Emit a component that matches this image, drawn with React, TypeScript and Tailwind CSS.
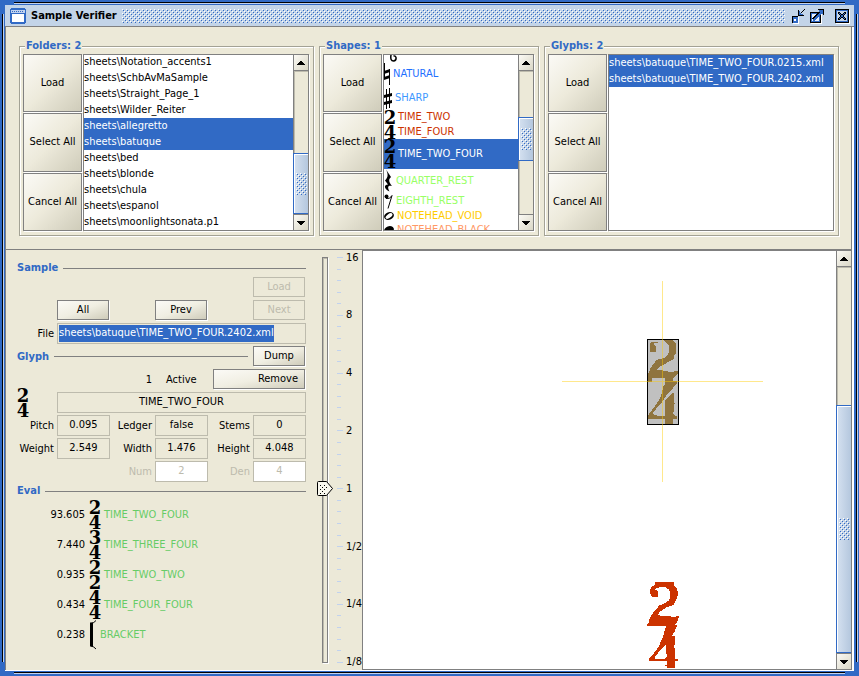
import { useEffect, useRef, useState } from 'react';
import type { ReactNode } from 'react';

/* Small dotted texture used by the title bar and the scroll thumbs. */
function Bumps({ id, className }: { id: string; className: string }) {
  return (
    <svg className={className} shapeRendering="crispEdges" aria-hidden="true">
      <defs>
        <pattern id={id} width="4" height="4" patternUnits="userSpaceOnUse">
          <rect x="0" y="0" width="1" height="1" fill="#ffffff" />
          <rect x="2" y="2" width="1" height="1" fill="#ffffff" />
          <rect x="1" y="1" width="1" height="1" fill="#316ac5" />
          <rect x="3" y="3" width="1" height="1" fill="#316ac5" />
        </pattern>
      </defs>
      <rect width="100%" height="100%" fill={`url(#${id})`} />
    </svg>
  );
}

function WindowIcon() {
  return (
    <svg width="16" height="16" viewBox="0 0 16 16" shapeRendering="crispEdges" aria-hidden="true">
      <rect x="0" y="1" width="16" height="14" fill="#316ac5" />
      <rect x="1" y="0" width="14" height="16" fill="#316ac5" />
      <rect x="1" y="2" width="14" height="3" fill="#c1d2ee" />
      <rect x="2" y="6" width="12" height="8" fill="#ffffff" />
      <path d="M2 3h1v1h-1zM4 3h1v1h-1zM6 3h1v1h-1zM8 3h1v1h-1zM10 3h1v1h-1zM12 3h1v1h-1z" fill="#316ac5" />
    </svg>
  );
}

function TitleButton({ label, children }: { label: string; children: ReactNode }) {
  return (
    <button type="button" aria-label={label} className="h-4 w-4">
      <svg width="16" height="16" viewBox="0 0 16 16" shapeRendering="crispEdges" aria-hidden="true">
        {children}
      </svg>
    </button>
  );
}

function TitleBar() {
  return (
    <header className="flex h-[22px] shrink-0 items-center border-b border-[#808080] bg-[#c3d4e8] pr-1 pl-[5px]">
      <WindowIcon />
      <h1 className="ml-[5px] text-[11px] leading-4 font-bold">Sample Verifier</h1>
      <Bumps id="title-bumps" className="ml-[5px] h-[14px] min-w-0 flex-1" />
      <div className="ml-[6px] flex items-center gap-0.5">
        <TitleButton label="Iconify">
          <rect x="2" y="9" width="6" height="7" fill="#fff" />
          <rect x="1" y="8" width="6" height="7" fill="#000" />
          <rect x="2" y="9" width="5" height="6" fill="#316ac5" />
          <rect x="3" y="11" width="2" height="2" fill="#fff" />
          <path d="M7 2h1v5h5v1h-6z" fill="#000" />
          <path d="M8 3h1v2h1v-1h1v-1h1v-1h1v1h-1v1h-1v1h-1v1h2v1h-4z" fill="#316ac5" />
          <path d="M10 4h1v-1h1v-1h1v-1h1v1h-1v1h-1v1h-1v1h-1z" fill="#000" />
        </TitleButton>
        <TitleButton label="Maximize">
          <rect x="2" y="5" width="11" height="11" fill="#fff" />
          <rect x="1" y="4" width="11" height="11" fill="#000" />
          <rect x="2" y="5" width="9" height="9" fill="#316ac5" />
          <rect x="3" y="6" width="7" height="7" fill="#e8f0fa" />
          <path d="M4 12L13 3" stroke="#000" strokeWidth="3" />
          <path d="M4 13L14 3" stroke="#316ac5" strokeWidth="2" />
          <path d="M9 1h6v6h-1v-4h-1v-1h-4z" fill="#000" />
          <path d="M10 2h4v4h-1v-2h-3z" fill="#316ac5" />
        </TitleButton>
      </div>
      <div className="ml-[9px] flex">
        <TitleButton label="Close">
          <rect x="2" y="2" width="14" height="14" fill="#fff" />
          <rect x="1" y="1" width="14" height="14" fill="#000" />
          <rect x="2" y="2" width="12" height="12" fill="#316ac5" />
          <rect x="3" y="3" width="10" height="10" fill="#c3d4e8" />
          <path d="M4 4h2v1h1v1h2v-1h1v-1h2v2h-1v1h-1v2h1v1h1v2h-2v-1h-1v-1h-2v1h-1v1h-2v-2h1v-1h1v-2h-1v-1h-1z" fill="#000" />
          <path d="M5 5h1v1h1v1h2v-1h1v-1h1v1h-1v1h-1v2h1v1h1v1h-1v-1h-1v-1h-2v1h-1v1h-1v-1h1v-1h1v-2h-1v-1h-1z" fill="#316ac5" />
        </TitleButton>
      </div>
    </header>
  );
}

function ArrowButton({ up }: { up?: boolean }) {
  return (
    <button
      type="button"
      aria-label={up ? 'Scroll up' : 'Scroll down'}
      className={
        'flex h-4 shrink-0 items-center justify-center bg-linear-to-br from-[#fbfaf5] to-[#dad7c6] ' +
        (up ? 'border-b border-[#808080]' : 'border-t border-[#808080]')
      }
    >
      <svg width="8" height="4" viewBox="0 0 8 4" shapeRendering="crispEdges" aria-hidden="true">
        <path d={up ? 'M3 0h2v1h1v1h1v1h1v1h-8v-1h1v-1h1v-1h1z' : 'M0 0h8v1h-1v1h-1v1h-1v1h-2v-1h-1v-1h-1v-1h-1z'} />
      </svg>
    </button>
  );
}

/* The three classes give the share of the track above, inside and below the thumb. */
function ScrollBar({ id, above, thumb, below }: { id: string; above: string; thumb: string; below: string }) {
  return (
    <div className="flex w-[15px] shrink-0 flex-col border-l border-[#808080] bg-[#ece9d8]">
      <ArrowButton up />
      <div className="flex min-h-0 flex-1 flex-col shadow-[inset_1px_1px_0_#bdbbad]">
        <div className={`basis-0 ${above}`} />
        <div
          className={`-ml-px flex basis-0 items-center justify-center border-y border-l border-[#316ac5] bg-linear-to-r from-[#d5e1f0] to-[#b4c7de] shadow-[inset_1px_1px_0_#fff] ${thumb}`}
        >
          <Bumps id={id} className="h-[22px] w-[11px]" />
        </div>
        <div className={`basis-0 ${below}`} />
      </div>
      <ArrowButton />
    </div>
  );
}

function SelectorPanel({ title, children }: { title: string; children: ReactNode }) {
  return (
    <fieldset className="min-w-0 border border-[#a3a295] pr-1 pb-1 pl-[3px] shadow-[1px_1px_0_#fff,inset_1px_1px_0_#fff]">
      <legend className="ml-0.5 bg-[#ece9d8] px-px text-[11px] leading-[14px] font-bold text-[#316ac5]">{title}</legend>
      <div className="mt-px flex h-[177px] gap-px">
        <div className="flex w-[59px] shrink-0 flex-col gap-px">
          {['Load', 'Select All', 'Cancel All'].map((label) => (
            <button
              key={label}
              type="button"
              className="min-h-0 flex-1 border border-[#808080] bg-linear-to-br from-[#fbfaf6] via-[#edeadb] to-[#cfccba] text-[11px] whitespace-nowrap shadow-[1px_1px_0_#fff]"
            >
              {label}
            </button>
          ))}
        </div>
        <div className="flex min-w-0 flex-1 border border-[#808080] bg-white shadow-[1px_1px_0_#fff]">{children}</div>
      </div>
    </fieldset>
  );
}

const folders = [
  'Notation_accents1',
  'SchbAvMaSample',
  'Straight_Page_1',
  'Wilder_Reiter',
  'allegretto',
  'batuque',
  'bed',
  'blonde',
  'chula',
  'espanol',
  'moonlightsonata.p1',
];
const pickedFolders = ['allegretto', 'batuque'];

function TimeDigits({ digits }: { digits: string[] }) {
  return (
    <span className="flex w-3 shrink-0 flex-col items-center font-['DejaVu_Serif',serif] text-[18px] leading-[15px] font-bold text-black">
      {digits.map((d, i) => (
        <span key={i} className="h-[15px]">
          {d}
        </span>
      ))}
    </span>
  );
}

function NaturalIcon() {
  return (
    <svg width="7" height="24" viewBox="0 0 7 24" className="shrink-0" aria-hidden="true">
      <path d="M0.5 1v16M5.5 7v16" stroke="#000" strokeWidth="1" fill="none" />
      <path d="M0 9l6-2v3l-6 2zM0 15l6-2v3l-6 2z" />
    </svg>
  );
}

function SharpIcon() {
  return (
    <svg width="9" height="22" viewBox="0 0 9 22" className="shrink-0" aria-hidden="true">
      <path d="M2.5 1v20M5.5 0v20" stroke="#000" strokeWidth="1" fill="none" />
      <path d="M0 7l8-2v3l-8 2zM0 14l8-2v3l-8 2z" />
    </svg>
  );
}

function QuarterRestIcon() {
  return (
    <svg width="9" height="24" viewBox="0 0 9 24" className="shrink-0" aria-hidden="true">
      <path d="M2 0.500l5 7.500c-3 3-2 5 1 9-4-1-5 1-2.500 5.500-5-2.500-6.500-6.500-1.500-7l-3-4c3-3 3.500-6 1-11z" />
    </svg>
  );
}

function EighthRestIcon() {
  return (
    <svg width="9" height="16" viewBox="0 0 9 16" className="shrink-0" aria-hidden="true">
      <circle cx="2.5" cy="3.5" r="2" />
      <path d="M2 5.5q4 1 6-3l-4 13" stroke="#000" strokeWidth="1" fill="none" />
    </svg>
  );
}

function NoteheadIcon({ filled }: { filled?: boolean }) {
  return (
    <svg width="10" height="10" viewBox="0 0 10 10" className="shrink-0" aria-hidden="true">
      <ellipse cx="5" cy="5" rx="5" ry="3.8" transform="rotate(-20 5 5)" />
      {!filled && <ellipse cx="5" cy="5" rx="4" ry="2" transform="rotate(-36 5 5)" fill="#fff" />}
    </svg>
  );
}

const shapes: { name: string; row: string; icon: ReactNode; picked?: boolean }[] = [
  { name: 'NATURAL', row: 'h-[26px] gap-0.5 text-[#1f70ff]', icon: <NaturalIcon /> },
  { name: 'SHARP', row: 'h-[23px] gap-0.5 text-[#3d98ff]', icon: <SharpIcon /> },
  { name: 'TIME_TWO', row: 'h-[15px] gap-0.5 text-[#cc3300]', icon: <TimeDigits digits={['2']} /> },
  { name: 'TIME_FOUR', row: 'h-[14px] gap-0.5 text-[#cc3300]', icon: <TimeDigits digits={['4']} /> },
  { name: 'TIME_TWO_FOUR', row: 'h-[30px] gap-0.5 bg-[#316ac5] text-white', icon: <TimeDigits digits={['2', '4']} />, picked: true },
  { name: 'QUARTER_REST', row: 'h-6 gap-[3px] text-[#99ff66]', icon: <QuarterRestIcon /> },
  { name: 'EIGHTH_REST', row: 'h-4 gap-[3px] text-[#99ff66]', icon: <EighthRestIcon /> },
  { name: 'NOTEHEAD_VOID', row: 'h-[14px] gap-[3px] text-[#ffcc00]', icon: <NoteheadIcon /> },
  { name: 'NOTEHEAD_BLACK', row: 'h-[14px] gap-[3px] text-[#ff9966]', icon: <NoteheadIcon filled /> },
];

function Selectors() {
  return (
    <section className="grid shrink-0 grid-cols-[1fr_220px_1fr] gap-[5px] border-b border-[#808080] pt-3 pr-3 pb-[13px] pl-[13px]">
      <SelectorPanel title="Folders: 2">
        <ul role="listbox" aria-label="Folders" className="flex min-w-0 flex-1 flex-col justify-end overflow-hidden">
          {folders.map((f) => (
            <li
              key={f}
              role="option"
              aria-selected={pickedFolders.includes(f)}
              className={
                'h-4 shrink-0 text-[11px] leading-4 whitespace-nowrap ' + (pickedFolders.includes(f) ? 'bg-[#316ac5] text-white' : '')
              }
            >
              {`sheets\\${f}`}
            </li>
          ))}
        </ul>
        <ScrollBar id="folder-bumps" above="grow-[84]" thumb="grow-[60]" below="grow-0" />
      </SelectorPanel>
      <SelectorPanel title="Shapes: 1">
        <ul role="listbox" aria-label="Shapes" className="min-w-0 flex-1 overflow-hidden">
          <li role="option" aria-selected={false} aria-label="Previous shape" className="h-1.5 pl-1.5">
            <svg width="7" height="7" viewBox="0 0 7 7" aria-hidden="true">
              <path d="M1 0q-1 6 2.500 6q3-.5 2.500-3.500q-.5-2-2.500-1.500" fill="none" stroke="#000" strokeWidth="1.500" />
            </svg>
          </li>
          {shapes.map((s) => (
            <li key={s.name} role="option" aria-selected={!!s.picked} className={`flex items-center text-[11px] ${s.row}`}>
              {s.icon}
              {s.name}
            </li>
          ))}
        </ul>
        <ScrollBar id="shape-bumps" above="grow-[47]" thumb="grow-[43]" below="grow-[54]" />
      </SelectorPanel>
      <SelectorPanel title="Glyphs: 2">
        <ul role="listbox" aria-label="Glyphs" className="min-w-0 flex-1 overflow-hidden">
          {['0215', '2402'].map((n) => (
            <li key={n} role="option" aria-selected className="h-4 bg-[#316ac5] text-[11px] leading-4 whitespace-nowrap text-white">
              {`sheets\\batuque\\TIME_TWO_FOUR.${n}.xml`}
            </li>
          ))}
        </ul>
      </SelectorPanel>
    </section>
  );
}

function Heading({ title, className }: { title: string; className: string }) {
  return (
    <div className={`flex items-center gap-[5px] ${className}`}>
      <h2 className="text-[11px] leading-[14px] font-bold text-[#316ac5]">{title}</h2>
      <span className="h-px flex-1 bg-[#808080]" />
    </div>
  );
}

function PushButton({ label, className = '', disabled }: { label: string; className?: string; disabled?: boolean }) {
  return (
    <button
      type="button"
      disabled={disabled}
      className={
        'mr-px mb-px border text-[11px] leading-4 ' +
        (disabled
          ? 'border-[#bdbbad] text-[#bdbbad] '
          : 'border-[#808080] bg-linear-to-br from-[#fbfaf6] via-[#f0eee2] to-[#cfccba] shadow-[1px_1px_0_#fff] ') +
        className
      }
    >
      {label}
    </button>
  );
}

function Field({ id, label, value, disabled }: { id: string; label: string; value: string; disabled?: boolean }) {
  return (
    <>
      <label htmlFor={id} className={'text-right leading-[21px] ' + (disabled ? 'text-[#bdbbad]' : '')}>
        {label}
      </label>
      <input
        id={id}
        readOnly
        disabled={disabled}
        value={value}
        className={'min-w-0 border border-[#bdbbad] text-center text-[11px] ' + (disabled ? 'bg-white text-[#bdbbad]' : '')}
      />
    </>
  );
}

const evaluations = [
  { grade: '93.605', name: 'TIME_TWO_FOUR', digits: ['2', '4'] },
  { grade: '7.440', name: 'TIME_THREE_FOUR', digits: ['3', '4'] },
  { grade: '0.935', name: 'TIME_TWO_TWO', digits: ['2', '2'] },
  { grade: '0.434', name: 'TIME_FOUR_FOUR', digits: ['4', '4'] },
];

function GlyphBoard() {
  const file = useRef<HTMLInputElement>(null);
  useEffect(() => {
    file.current?.focus();
    file.current?.select();
  }, []);
  return (
    <section className="shrink-0 pt-[11px] pl-[11px] text-[11px]">
      <div className="grid grid-cols-[37px_53px_39px_53px_39px_53px] grid-rows-[14px] gap-x-[3px] gap-y-0.5 auto-rows-[21px]">
        <Heading title="Sample" className="col-span-6" />
        <PushButton label="Load" disabled className="col-start-6" />
        <PushButton label="All" className="col-start-2" />
        <PushButton label="Prev" className="col-start-4" />
        <PushButton label="Next" disabled className="col-start-6" />
        <label htmlFor="file" className="text-right leading-[21px]">
          File
        </label>
        <input
          id="file"
          ref={file}
          readOnly
          defaultValue={'sheets\\batuque\\TIME_TWO_FOUR.2402.xml'}
          className="col-span-5 min-w-0 border border-[#bdbbad] px-px text-[11px] outline-none selection:bg-[#316ac5] selection:text-white"
        />
        <Heading title="Glyph" className="col-span-5 mr-0.5" />
        <PushButton label="Dump" />
        <span className="col-start-3 text-right leading-[21px]">1</span>
        <span className="pl-[11px] leading-[21px]">Active</span>
        <PushButton label="Remove" className="col-span-2 ml-0.5 pr-1.5 text-right" />
        <div className="flex items-center">
          <TimeDigits digits={['2', '4']} />
        </div>
        <input
          aria-label="Shape"
          readOnly
          value="TIME_TWO_FOUR"
          className="col-span-5 min-w-0 border border-[#bdbbad] text-center text-[11px]"
        />
        <Field id="pitch" label="Pitch" value="0.095" />
        <Field id="ledger" label="Ledger" value="false" />
        <Field id="stems" label="Stems" value="0" />
        <Field id="weight" label="Weight" value="2.549" />
        <Field id="width" label="Width" value="1.476" />
        <Field id="height" label="Height" value="4.048" />
        <span className="col-span-2" />
        <Field id="num" label="Num" value="2" disabled />
        <Field id="den" label="Den" value="4" disabled />
      </div>
      <Heading title="Eval" className="mt-0.5" />
      <ul className="mt-0.5">
        {evaluations.map((e) => (
          <li key={e.name} className="flex h-[30px] items-center">
            <span className="w-[68px] text-right">{e.grade}</span>
            <span className="mx-[3px] ml-1 flex">
              <TimeDigits digits={e.digits} />
            </span>
            <span className="text-[#66cc66]">{e.name}</span>
          </li>
        ))}
        <li className="flex h-[30px] items-center">
          <span className="w-[68px] text-right">0.238</span>
          <svg width="8" height="30" viewBox="0 0 8 30" className="mr-[3px] ml-1" aria-hidden="true">
            <path d="M1 2.500h3v24h-3z" />
            <path d="M2 3.500q3-.5 5-3M2 26q3 .5 5 3" fill="none" stroke="#000" strokeWidth="1" />
          </svg>
          <span className="text-[#66cc66]">BRACKET</span>
        </li>
      </ul>
    </section>
  );
}

const zoomLabels = ['16', '8', '4', '2', '1', '1/2', '1/4', '1/8'];

function ZoomSlider() {
  const [zoom, setZoom] = useState(15);
  return (
    <section className="relative flex w-14 shrink-0 pt-[7px] pb-[7px] pl-4">
      <div className="relative w-1.5 border border-[#808080] shadow-[1px_1px_0_#fff,inset_1px_1px_0_#bdbbad]">
        <svg
          width="16"
          height="16"
          viewBox="0 0 16 16"
          className="absolute -left-1.5 -mt-2"
          style={{ top: `${((35 - zoom) / 35) * 100}%` }}
          aria-hidden="true"
        >
          <path d="M1.500 0.500h8l6 7-6 7h-8q-1-0-1-1v-12q0-1 1-1z" fill="#f8f7ee" stroke="#000" />
          <path
            d="M3 4h1v1h-1zM7 4h1v1h-1zM5 6h1v1h-1zM3 8h1v1h-1zM7 8h1v1h-1zM5 10h1v1h-1zM3 12h1v1h-1zM7 12h1v1h-1zM9 6h1v1h-1z"
            shapeRendering="crispEdges"
          />
        </svg>
      </div>
      <div className="ml-[9px] flex flex-col justify-between text-[11px]">
        {Array.from({ length: 36 }, (_, i) => (
          <div key={i} className="flex h-px items-center gap-[3px]">
            <span className={'h-px bg-[#c1d2ee] ' + (i % 5 === 0 ? 'w-1.5' : 'w-1')} />
            {i % 5 === 0 && <span className="leading-4">{zoomLabels[i / 5]}</span>}
          </div>
        ))}
      </div>
      <input
        type="range"
        aria-label="Zoom"
        min={0}
        max={35}
        value={zoom}
        onChange={(e) => setZoom(Number(e.target.value))}
        className="absolute inset-y-0 left-3 w-4 opacity-0 [direction:rtl] [writing-mode:vertical-lr]"
      />
    </section>
  );
}

/* Scanned glyph bitmaps laid on the free drawing area. */
function SheetView() {
  return (
    <section className="flex min-w-0 flex-1 border-t border-b border-l border-[#808080] bg-white">
      <div className="relative min-w-0 flex-1 overflow-hidden">
        <svg className="absolute inset-0 h-full w-full" shapeRendering="crispEdges" role="img" aria-label="Sheet glyphs">
          <g transform="translate(-363 -251)">
            <rect x="647.500" y="339.500" width="31" height="85" fill="#c0c0c0" stroke="#000" />
            <g transform="translate(550 270) scale(0.3333)">
              <path
                fill="#8f743f"
                d="M342 210H369L372 216 378 222V252L372 258V266L345 282 330 290 318 300H336L339 303 370 306 375 303H384V312L378 318 369 324V333H381V340L372 350 360 366 348 378 333 400 318 417 309 429 312 436 345 438V390L357 380 366 370H372V395L375 400 372 404V425L369 430 372 436 380 438V446H369V462H345V446H294V436L303 425 315 408 324 395 333 380 336 365 340 350 345 342V324H306V335H294V315L297 306 303 292 312 280 320 270 342 264 352 255 358 244V232L354 222 342 213Z"
              />
              <path fill="#8f743f" d="M306 215H324V219H314L311 224 318 228V245H300V222Z" />
            </g>
            <path d="M562 381.500h201M662.500 281v201" stroke="#ffcc00" strokeOpacity="0.450" fill="none" />
            <path
              transform="translate(600 500) scale(0.3333)"
              fill="#cc3300"
              d="M165 246H222V256L232 268 234 284 228 300 222 314 200 322 180 335 172 346 205 348 229 353V348H237L233 362 226 374 231 376 224 394 214 412 205 425 195 438 186 446 175 458 165 470V476H195L200 470 198 440 196 432 212 414 218 408H224V434L222 440 225 445V476L233 478V482L225 484V504H201V497H196V494H201V482H148V474L160 462 175 442 185 420 192 400 198 378H140V374L146 370 150 352 160 338 178 316 195 310 208 300 211 285 208 270 198 262H180L170 265 166 269 173 272V290H155L150 280V268L156 260 165 254Z"
            />
          </g>
        </svg>
      </div>
      <ScrollBar id="sheet-bumps" above="grow-[139]" thumb="grow-[247]" below="grow-0" />
    </section>
  );
}

export default function App() {
  return (
    <div className="relative flex h-screen min-h-[640px] flex-col overflow-hidden bg-[#316ac5] p-[5px] font-['DejaVu_Sans_Condensed','Noto_Sans',sans-serif] text-black">
      {/* engraved grooves on the window frame */}
      <span className="absolute inset-x-[14px] top-0.5 h-0.5 border-t border-black bg-[#c1d2ee]" />
      <span className="absolute inset-x-[14px] bottom-0.5 h-0.5 border-t border-black bg-[#c1d2ee]" />
      <span className="absolute inset-y-[14px] left-0.5 w-0.5 border-l border-black bg-[#c1d2ee]" />
      <span className="absolute inset-y-[14px] right-[1px] w-0.5 border-l border-black bg-[#c1d2ee]" />
      <TitleBar />
      <main className="flex min-h-0 flex-1 flex-col border-r-2 border-b border-white bg-[#ece9d8]">
        <div className="flex min-h-0 flex-1 flex-col border-x border-[#808080]">
          <Selectors />
          <div className="flex min-h-0 flex-1">
            <GlyphBoard />
            <ZoomSlider />
            <SheetView />
          </div>
        </div>
      </main>
    </div>
  );
}
